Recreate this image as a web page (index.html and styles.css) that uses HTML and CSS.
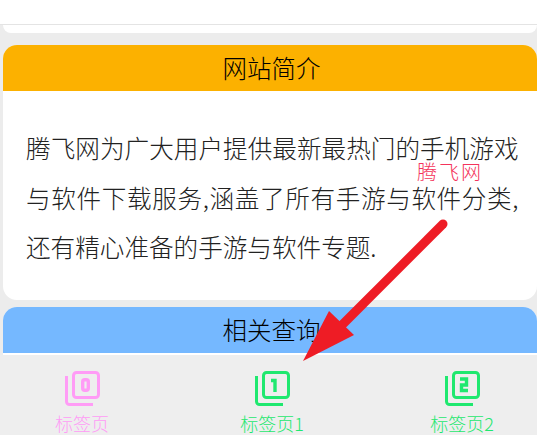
FILE: index.html
```html
<!DOCTYPE html>
<html lang="zh-CN">
<head>
    <meta charset="UTF-8">
    <meta name="viewport" content="width=device-width, initial-scale=1.0">
    <title>网站简介</title>
    <link rel="stylesheet" href="styles.css">
</head>
<body>
    <div class="top-bar"></div>
    <div class="content">
        <div class="card card-prev"></div>

        <!-- 网站简介 -->
        <div class="card card-intro">
            <div class="card-title title-orange">网站简介</div>
            <p class="card-text">腾飞网为广大用户提供最新最热门的手机游戏与软件下载服务,涵盖了所有手游与软件分类,还有精心准备的手游与软件专题.</p>
        </div>

        <!-- 相关查询 -->
        <div class="card card-query">
            <div class="card-title title-blue">相关查询</div>
        </div>
    </div>

    <!-- 底部标签 -->
    <div class="tabbar">
        <div class="tab tab-pink">
            <svg class="tab-icon" viewBox="0 0 36 36"><path d="M2.500 5v25.500a3 3 0 0 0 3 3h23.500"/><rect x="9.500" y="1.500" width="25" height="25" rx="3"/><rect class="digit" x="18.700" y="8.700" width="5.600" height="10.600" rx="2"/></svg>
            <span>标签页</span>
        </div>
        <div class="tab tab-green">
            <svg class="tab-icon" viewBox="0 0 36 36"><path d="M2.500 5v25.500a3 3 0 0 0 3 3h23.500"/><rect x="9.500" y="1.500" width="25" height="25" rx="3"/><path class="digit" d="M17 9.500h4v11.500"/></svg>
            <span>标签页1</span>
        </div>
        <div class="tab tab-green">
            <svg class="tab-icon" viewBox="0 0 36 36"><path d="M2.500 5v25.500a3 3 0 0 0 3 3h23.500"/><rect x="9.500" y="1.500" width="25" height="25" rx="3"/><path class="digit" d="M16 8h6.500v6h-5v5.500h6.500"/></svg>
            <span>标签页2</span>
        </div>
    </div>

    <!-- 水印和箭头 -->
    <div class="watermark">腾飞网</div>
    <svg class="arrow" viewBox="0 0 537 435"><path class="arrow-line" d="M443 224L340 327"/><path class="arrow-head" d="M303 361L329 311L354 335Z"/></svg>
</body>
</html>
```
FILE: styles.css
```css
* {
    box-sizing: border-box;
}

body {
    margin: 0;
    height: 435px;
    overflow: hidden;
    display: flex;
    flex-direction: column;
    background: #ececec;
    font-family: "Noto Sans CJK SC", "Liberation Sans", sans-serif;
    font-weight: 300;
}

.top-bar {
    height: 25px;
    background: #fff;
    border-bottom: 1px solid #e4e4e4;
}

.content {
    flex: 1;
    min-height: 0;
    overflow: hidden;
    padding-left: 3px;
}

/* Cards */
.card {
    background: #fff;
    border-radius: 14px;
}

.card-prev {
    height: 8px;
    border-radius: 0 0 14px 14px;
    margin-bottom: 12px;
}

.card-intro {
    height: 255px;
    margin-bottom: 7px;
}

.card-query {
    height: 48px;
    border-radius: 14px 14px 0 0;
}

.card-title {
    height: 46px;
    line-height: 46px;
    padding-left: 3px;
    text-align: center;
    font-size: 24.5px;
    color: #000;
    border-radius: 14px 14px 0 0;
}

.title-orange {
    background: #fcb100;
}

.title-blue {
    background: #75b8ff;
}

.card-text {
    margin: 0;
    padding: 32px 18.500px 0 23px;
    font-size: 24.6px;
    line-height: 49.5px;
    text-align: justify;
    color: #222;
}

/* Tab bar */
.tabbar {
    height: 80px;
    display: grid;
    grid-template-columns: repeat(3, 164px);
    column-gap: 26px;
    background: #eee;
}

.tab {
    display: flex;
    flex-direction: column;
    align-items: center;
    padding-top: 16px;
    font-size: 18px;
    line-height: 24px;
}

.tab-pink {
    color: #ff9cf6;
}

.tab-green {
    color: #1fe86f;
}

.tab-icon {
    width: 36px;
    height: 36px;
    margin-bottom: 4px;
    fill: none;
    stroke: currentColor;
    stroke-width: 3;
}

.digit {
    stroke-width: 3.400;
}

/* Overlays */
.watermark {
    position: absolute;
    left: 417px;
    top: 158px;
    font-size: 20px;
    line-height: 28px;
    letter-spacing: 2px;
    color: #f4345c;
}

.arrow {
    position: absolute;
    left: 0;
    top: 0;
    width: 537px;
    height: 435px;
    pointer-events: none;
}

.arrow-line {
    stroke: #ee1c25;
    stroke-width: 9;
    stroke-linecap: round;
    fill: none;
}

.arrow-head {
    fill: #ee1c25;
}
```
